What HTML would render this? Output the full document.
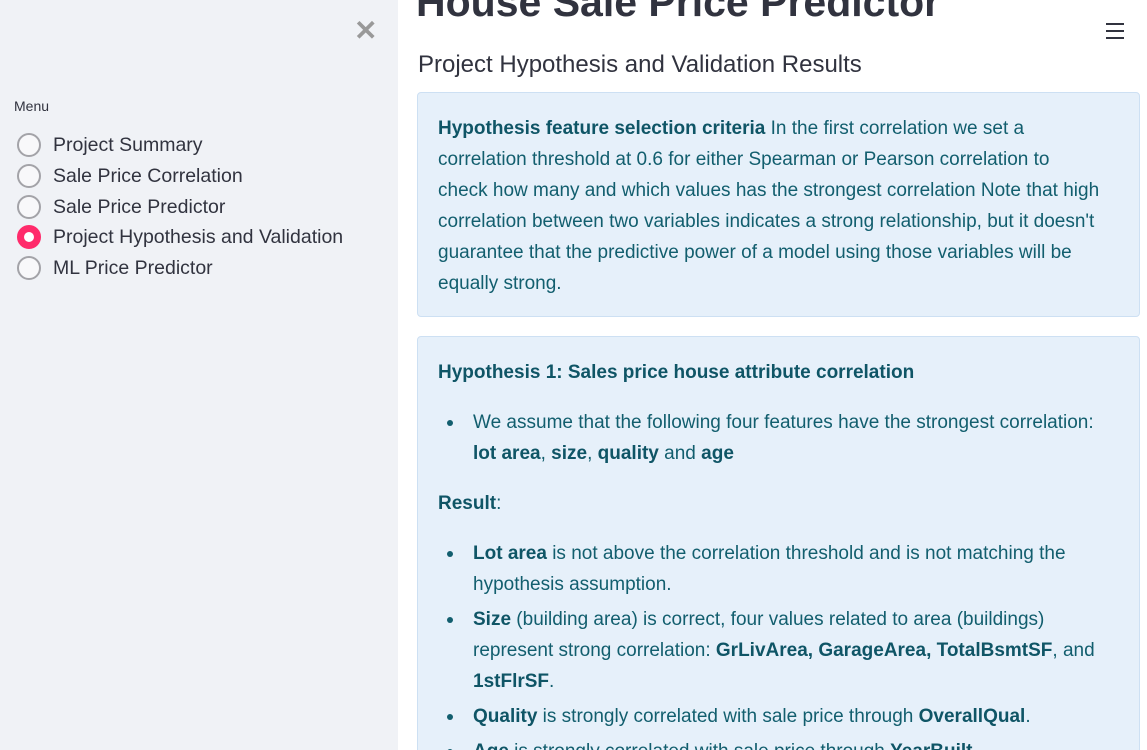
<!DOCTYPE html>
<html><head><style>
*{margin:0;padding:0;box-sizing:border-box}
html,body{width:1147px;height:750px;overflow:hidden}
body{background:#fff;font-family:"Liberation Sans",sans-serif;position:relative}
.side{position:absolute;left:0;top:0;width:398px;height:750px;background:#f0f2f6}
.x{position:absolute;left:354px;top:14px;font-size:28px;color:#999;font-weight:bold}
.menu{position:absolute;left:14px;top:98px;font-size:14px;color:#31333f}
.r{position:absolute;left:17px;font-size:19.5px;color:#31333f;height:26px;line-height:26px}
.r i{position:absolute;left:0;top:1px;width:24px;height:24px;border:2.5px solid #a3a3a8;border-radius:50%;background:#f8f8fa}
.r span{position:absolute;left:36px;white-space:nowrap}
.r i.on{border:7px solid #ff2b6b;background:#fff}
.title{position:absolute;left:416px;top:-21px;font-size:41px;font-weight:bold;color:#31333f;white-space:nowrap}
.h{position:absolute;left:418px;top:51px;font-size:24px;color:#31333f}
.ham{position:absolute;left:1106px;top:23px;width:18px}
.ham b{display:block;height:2px;background:#31333f;margin-bottom:5px}
.box{position:absolute;left:417px;width:723px;background:#e6f0fa;border:1px solid #cde0f3;border-radius:4px;color:#125e6e;font-size:19px;line-height:31px;padding:0 20px;overflow:hidden}
.box b{color:#0f5566}
.li{position:relative;padding-left:35px}
.li:before{content:"";position:absolute;left:9px;top:13px;width:6px;height:6px;border-radius:50%;background:#125e6e}
</style></head><body>
<div class="side">
<div class="x">✕</div>
<div class="menu">Menu</div>
<div class="r" style="top:132px"><i></i><span>Project Summary</span></div>
<div class="r" style="top:163px"><i></i><span>Sale Price Correlation</span></div>
<div class="r" style="top:194px"><i></i><span>Sale Price Predictor</span></div>
<div class="r" style="top:224px"><i class="on"></i><span>Project Hypothesis and Validation</span></div>
<div class="r" style="top:255px"><i></i><span>ML Price Predictor</span></div>
</div>
<div class="title">House Sale Price Predictor</div>
<div class="ham"><b></b><b></b><b></b></div>
<div class="h">Project Hypothesis and Validation Results</div>
<div class="box" style="top:92px;height:225px;padding-top:20px">
<b>Hypothesis feature selection criteria</b> In the first correlation we set a<br>correlation threshold at 0.6 for either Spearman or Pearson correlation to<br>check how many and which values has the strongest correlation Note that high<br>correlation between two variables indicates a strong relationship, but it doesn't<br>guarantee that the predictive power of a model using those variables will be<br>equally strong.
</div>
<div class="box" style="top:336px;height:440px;padding-top:20px">
<div><b>Hypothesis 1: Sales price house attribute correlation</b></div>
<div class="li" style="margin-top:19px">We assume that the following four features have the strongest correlation:<br><b>lot area</b>, <b>size</b>, <b>quality</b> and <b>age</b></div>
<div style="margin-top:19px"><b>Result</b>:</div>
<div class="li" style="margin-top:19px"><b>Lot area</b> is not above the correlation threshold and is not matching the<br>hypothesis assumption.</div>
<div class="li" style="margin-top:4px"><b>Size</b> (building area) is correct, four values related to area (buildings)<br>represent strong correlation: <b>GrLivArea, GarageArea, TotalBsmtSF</b>, and<br><b>1stFlrSF</b>.</div>
<div class="li" style="margin-top:4px"><b>Quality</b> is strongly correlated with sale price through <b>OverallQual</b>.</div>
<div class="li" style="margin-top:4px"><b>Age</b> is strongly correlated with sale price through <b>YearBuilt</b>.</div>
</div>
</body></html>
